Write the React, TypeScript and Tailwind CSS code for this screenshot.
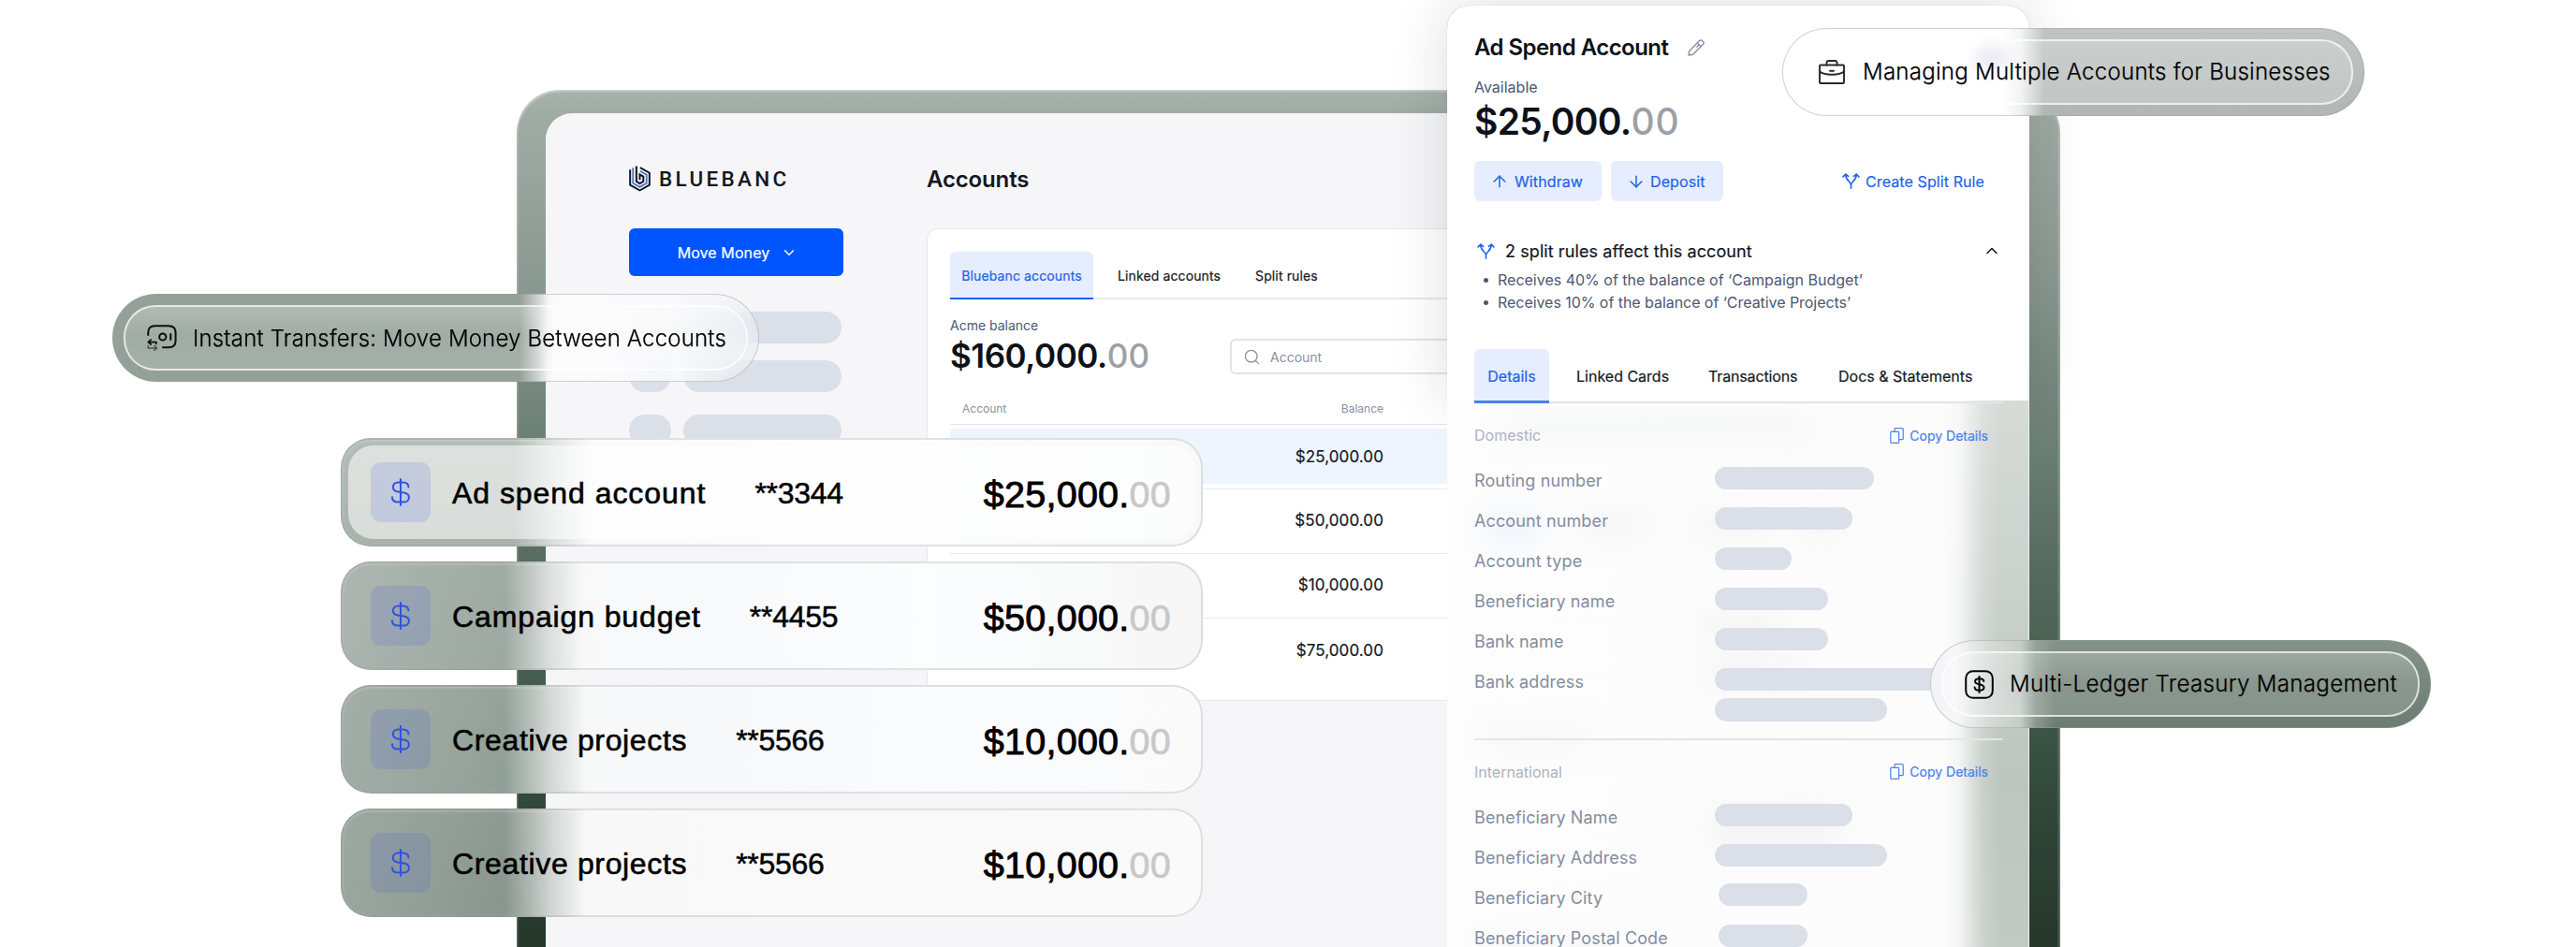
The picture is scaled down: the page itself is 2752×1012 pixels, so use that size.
import React from 'react';
import { ArrowDown, ArrowUp, ChevronDown, ChevronUp, Search } from 'lucide-react';

/* ---------- icons ---------- */

function BrandMark() {
  return (
    <svg viewBox="0 0 70 84" className="h-[28px] w-[23px]" fill="none" strokeWidth="6">
      <path d="M3.5 12V62L35 80L66.500 62V23L36 6" stroke="#10141f" />
      <path d="M13 6V56.500L35 69L57 56.500V29L36 17" stroke="#4a72cc" strokeWidth="5.500" />
      <path d="M24 1V51L35 57.500L46.500 51V35L35 28.500V46" stroke="#10141f" />
    </svg>
  );
}

function SplitIcon({ className }: { className: string }) {
  return (
    <svg viewBox="0 0 18 16" className={className} fill="none" stroke="#1f63ea" strokeWidth="1.500" strokeLinecap="round" strokeLinejoin="round">
      <path d="M9 15.300V11.500C9 9 3.600 7.500 3.600 1.500" />
      <path d="M9 11.500C9 9 14.400 7.500 14.400 1.500" />
      <path d="M1 3.600L3.600 1L6.200 3.200" />
      <path d="M11.800 3.200L14.400 1L17 3.600" />
    </svg>
  );
}

function PencilIcon() {
  return (
    <svg viewBox="0 0 18 18" className="h-[18px] w-[18px]" fill="none" stroke="#8b90a3" strokeWidth="1.400" strokeLinejoin="round">
      <path d="M1 17L1.700 12.400L12.300 1.800C13.300 0.800 14.800 0.800 15.800 1.800L16.200 2.200C17.200 3.200 17.200 4.700 16.200 5.700L5.600 16.300L1 17Z" />
      <path d="M10.300 3.800L14.200 7.700" />
      <path d="M12.300 5.700L9.500 8.500" />
    </svg>
  );
}

function CopyIcon() {
  return (
    <svg viewBox="0 0 15 17" className="h-[17px] w-[15px]" fill="none" stroke="#4a82ee" strokeWidth="1.200" strokeLinejoin="round">
      <rect x="0.800" y="4.300" width="8.800" height="12" rx="0.800" />
      <path d="M5 4.300V1.500C5 1 5.300 0.700 5.800 0.700H13.200C13.800 0.700 14.200 1 14.200 1.600V11.900C14.200 12.400 13.900 12.700 13.400 12.700H9.600" />
    </svg>
  );
}

function DollarIcon() {
  return (
    <svg viewBox="0 0 20 30" className="h-[30px] w-[20px]" fill="none" stroke="#3252de" strokeWidth="2" strokeLinecap="round">
      <path d="M10 1V29" />
      <path d="M18.400 9.600C18.400 6 15.700 4.400 12.200 4.400H7.600C4.200 4.400 1.900 6.600 1.900 9.500C1.900 12.500 3.900 14 7 14.500L13.300 15.400C16.700 15.900 18.900 17.500 18.900 20.400C18.900 23.500 16.500 25.600 13 25.600H7.200C3.500 25.600 1 23.600 1 20.200" />
    </svg>
  );
}

function TransferIcon() {
  return (
    <svg viewBox="0 0 32 28" className="h-[28px] w-[32px]" fill="none" stroke="#0c0e0d" strokeWidth="2" strokeLinecap="round" strokeLinejoin="round">
      <path d="M1.300 11V8.500C1.300 3.800 3.500 1.200 8.500 1.200H23C28.200 1.200 30.600 3.600 30.600 8.500V17C30.600 22 28.200 24.300 23 24.300H17" />
      <ellipse cx="16.800" cy="13" rx="3.600" ry="3.600" />
      <path d="M25.300 10V16" />
      <path d="M10 20.500V18.700H2M4.200 16L1.300 18.700L4.200 21" strokeWidth="1.700" />
      <path d="M1.300 22.500V25H9.500M8 22.500L10.800 25L8 27.200" stroke="#4b5150" strokeWidth="1.500" />
    </svg>
  );
}

function BriefcaseIcon() {
  return (
    <svg viewBox="0 0 28 26" className="h-[26px] w-[28px]" fill="none" stroke="#262a29" strokeWidth="1.900" strokeLinejoin="round" strokeLinecap="round">
      <rect x="1" y="5.500" width="26" height="19.500" rx="1" />
      <path d="M8.500 5.500V3C8.500 1.700 9.200 1 10.500 1H17.500C18.800 1 19.500 1.700 19.500 3V5.500" />
      <path d="M1 12.500C6 16.800 22 16.800 27 12.500" />
      <path d="M12 11.700H16" />
    </svg>
  );
}

function LedgerIcon() {
  return (
    <svg viewBox="0 0 31 31" className="h-[31px] w-[31px]" fill="none" stroke="#050606" strokeWidth="2" strokeLinecap="round">
      <rect x="1.200" y="1.200" width="28.600" height="28.600" rx="7.500" />
      <path d="M15.500 7V24" />
      <path d="M20.300 12C20.300 10.200 18.600 9.200 15.700 9.200C12.700 9.200 11 10.400 11 12.200C11 16.400 20.500 14.200 20.500 18.700C20.500 20.700 18.600 21.800 15.600 21.800C12.500 21.800 10.600 20.600 10.600 18.600" />
    </svg>
  );
}

/* ---------- dashboard ---------- */

function PlaceholderRow({ className }: { className: string }) {
  return (
    <div className={className}>
      <span className="w-[45px] rounded-full bg-[#dadfe8]" />
      <span className="w-[169px] rounded-full bg-[#dadfe8]" />
    </div>
  );
}

function Sidebar() {
  return (
    <aside className="w-[229px] shrink-0">
      <div className="flex h-[28px] items-center gap-[9px]">
        <BrandMark />
        <span className="font-['Roboto'] text-[22.500px] font-medium leading-[28px] tracking-[3.300px] text-[#14171f]">BLUEBANC</span>
      </div>
      <button className="mt-[38.500px] flex h-[51px] w-full items-center justify-center rounded-[6px] bg-[#0055ff] pl-[3px] pt-[2px] text-[16px] font-normal tracking-[0.100px] text-white [-webkit-text-stroke:0.200px_currentColor]">
        Move Money
        <ChevronDown className="ml-[12px] h-[18px] w-[18px]" strokeWidth={1.900} />
      </button>
      <div className="mt-[38.500px]">
        <PlaceholderRow className="flex h-[34px] gap-[13px]" />
        <PlaceholderRow className="mt-[18px] flex h-[34px] gap-[13px]" />
        <PlaceholderRow className="mt-[24px] flex h-[34px] gap-[13px]" />
      </div>
    </aside>
  );
}

const balances = ['$25,000.00', '$50,000.00', '$10,000.00', '$75,000.00'];

function AccountsCard() {
  return (
    <section className="mt-[38px] h-[505px] rounded-[12px] border-[1.500px] border-[#e6e7ea] bg-white pl-[24px] pt-[24px]">
      <nav className="flex h-[51px] border-b-[2px] border-[#e8e9eb] text-[14px] font-normal tracking-[0.120px] text-[#15181f] [-webkit-text-stroke:0.200px_currentColor]">
        <span className="flex h-[51px] w-[153px] items-center justify-center rounded-t-[6px] border-b-[2px] border-[#1f63ea] bg-[#e6edfe] pt-[2px] text-[#1f63ea]">
          Bluebanc accounts
        </span>
        <span className="ml-[26px] flex h-[51px] items-center">Linked accounts</span>
        <span className="ml-[37px] flex h-[51px] items-center">Split rules</span>
      </nav>
      <div className="flex h-[83px] pt-[18px]">
        <div className="w-[299px]">
          <p className="text-[14px] leading-[20px] text-[#4d5773]">Acme balance</p>
          <p className="mt-[2px] text-[35px] font-semibold leading-[40px] tracking-[-0.450px] text-[#0e1118]">
            $160,000.<span className="font-medium tracking-[0.300px] text-[#9ca0a8]">00</span>
          </p>
        </div>
        <div className="mt-[24px] flex h-[38px] flex-1 items-center rounded-l-[6px] border-[2px] border-r-0 border-[#e3e4e7] pl-[12px] text-[14px] text-[#8b91a1]">
          <Search className="mr-[10px] h-[19px] w-[19px]" strokeWidth={1.700} />
          Account
        </div>
      </div>
      <div className="flex h-[51px] items-end justify-between border-b-[1.500px] border-[#e3e4e7] pb-[8px] pl-[13px] text-[12px] leading-[16px] text-[#8b91a1]">
        <span>Account</span>
        <span className="mr-[689px]">Balance</span>
      </div>
      <div className="text-[17px] font-normal tracking-[0.100px] text-[#15181f] [-webkit-text-stroke:0.200px_currentColor]">
        <div className="h-[69px] border-b-[1.500px] border-[#e8e9ec] pt-[4px]">
          <div className="flex h-[59px] items-center justify-end rounded-l-[4px] bg-[#eff5ff] pr-[689px] pt-[2px]">{balances[0]}</div>
        </div>
        {balances.slice(1).map((b, i) => (
          <div key={b} className={i === 2 ? 'flex h-[69px] items-center justify-end pr-[689px]' : 'flex h-[69px] items-center justify-end border-b-[1.500px] border-[#e8e9ec] pr-[689px]'}>
            {b}
          </div>
        ))}
      </div>
    </section>
  );
}

function Dashboard() {
  return (
    <div className="ml-[552px] mt-[96px] h-[960px] w-[1649px] rounded-t-[46px] bg-[linear-gradient(to_bottom,#a9b3ad_0px,#a0aba4_25px,#8a9991_205px,#6d8076_370px,#586c61_500px,#4a6153_600px,#3a5344_690px,#2e4437_790px,#26372b_916px)] pl-[31px] pr-[33px] pt-[25px] shadow-[inset_1px_2px_2px_rgba(255,255,255,0.35),inset_-2px_0_2px_rgba(255,255,255,0.25)]">
      <div className="flex h-[935px] overflow-hidden rounded-t-[28px] bg-[#f6f6f9] pl-[89px] pt-[56px]">
        <Sidebar />
        <main className="ml-[89px] flex-1">
          <h1 className="text-[24px] font-semibold leading-[29px] tracking-[-0.150px] text-[#14171f]">Accounts</h1>
          <AccountsCard />
        </main>
      </div>
    </div>
  );
}

/* ---------- account detail panel ---------- */

function DetailRow({ label, bar }: { label: string; bar: string }) {
  return (
    <div className="flex h-[43.100px] items-start">
      <span className="w-[257px] pt-[1.500px] text-[18px] leading-[25px] tracking-[0.120px] text-[#838da1]">{label}</span>
      <span className={bar} />
    </div>
  );
}

function SectionHead({ title }: { title: string }) {
  return (
    <div className="flex h-[20px] items-center justify-between pr-[43px]">
      <span className="text-[16px] text-[#adb2bf]">{title}</span>
      <span className="flex items-center gap-[6px] text-[14px] font-normal text-[#4a82ee] [-webkit-text-stroke:0.200px_currentColor]">
        <CopyIcon />
        Copy Details
      </span>
    </div>
  );
}

function Ghosts() {
  return (
    <div className="pointer-events-none absolute inset-0 overflow-hidden opacity-45">
      <div className="blur-[14px]">
        <div className="ml-[60px] mt-[16px] h-[30px] w-[330px] bg-[#eeeff1]" />
        <div className="ml-[40px] mt-[74px] flex h-[30px] gap-[40px]">
          <span className="w-[60px] bg-[#dfe6fc]" />
          <span className="w-[80px] bg-[#eeeeef]" />
          <span className="w-[80px] bg-[#eeeeef]" />
          <span className="w-[40px] bg-[#eeeeef]" />
        </div>
        <div className="ml-[270px] mt-[75px] h-[30px] w-[90px] bg-[#ededef]" />
        <div className="ml-[270px] mt-[20px] h-[30px] w-[110px] bg-[#ededef]" />
        <div className="ml-[40px] mt-[40px] h-[30px] w-[110px] bg-[#f0f0f2]" />
        <div className="ml-[280px] mt-[60px] h-[40px] w-[140px] bg-[#eaeaeb]" />
        <div className="ml-[40px] mt-[100px] h-[30px] w-[130px] bg-[#efeff1]" />
      </div>
    </div>
  );
}

function DetailPanel() {
  return (
    <div className="absolute left-[1546px] top-[6px] w-[622px]">
      <div className="h-[422px] rounded-t-[24px] bg-white pl-[29px] pt-[30px] shadow-[0_0_60px_rgba(20,24,30,0.150),0_0_1px_rgba(0,0,0,0.300)]">
        <div className="flex h-[30px] items-center">
          <h2 className="mr-[21px] text-[24px] font-semibold tracking-[-0.550px] text-[#0e1118]">Ad Spend Account</h2>
          <PencilIcon />
        </div>
        <p className="mt-[17px] text-[16px] leading-[20px] text-[#4d5773]">Available</p>
        <p className="mt-[3.500px] text-[39px] font-semibold leading-[46px] tracking-[-0.700px] text-[#0e1118]">
          $25,000.<span className="font-medium tracking-[0.800px] text-[#9ca0a8]">00</span>
        </p>
        <div className="mt-[19.500px] flex h-[43px] items-center text-[16px] font-normal tracking-[0.100px] text-[#1f63ea] [-webkit-text-stroke:0.200px_currentColor]">
          <span className="flex h-[43px] w-[136px] items-center rounded-[6px] bg-[#e6edfe] pl-[17px]">
            <ArrowUp className="mr-[6px] h-[20px] w-[20px]" strokeWidth={1.800} />
            Withdraw
          </span>
          <span className="ml-[10px] flex h-[43px] w-[120px] items-center rounded-[6px] bg-[#e6edfe] pl-[17px]">
            <ArrowDown className="mr-[5px] h-[20px] w-[20px]" strokeWidth={1.800} />
            Deposit
          </span>
          <span className="ml-[127px] flex items-center gap-[6px]">
            <SplitIcon className="h-[17px] w-[19px]" />
            Create Split Rule
          </span>
        </div>
        <div className="mt-[41px] flex h-[24px] items-center pl-[3px]">
          <SplitIcon className="h-[17px] w-[19px]" />
          <span className="ml-[11px] w-[264px] whitespace-nowrap text-[18px] font-normal tracking-[0.080px] text-[#15181f] [-webkit-text-stroke:0.200px_currentColor]">2 split rules affect this account</span>
          <ChevronUp className="ml-[246px] h-[20px] w-[20px] text-[#15181f]" strokeWidth={1.900} />
        </div>
        <ul className="mt-[7px] text-[16px] leading-[24px] text-[#4d5773]">
          <li className="flex items-center"><i className="ml-[10px] mr-[10px] h-[5px] w-[5px] rounded-full bg-[#4d5773]" />Receives 40% of the balance of ‘Campaign Budget’</li>
          <li className="flex items-center tracking-[-0.050px]"><i className="ml-[10px] mr-[10px] h-[5px] w-[5px] rounded-full bg-[#4d5773]" />Receives 10% of the balance of ‘Creative Projects’</li>
        </ul>
        <nav className="relative z-10 mr-[28px] mt-[38px] flex h-[58px] items-center border-b-[2px] border-[#e2e4e5] text-[16px] font-normal text-[#15181f] [-webkit-text-stroke:0.200px_currentColor]">
          <span className="flex h-[58px] w-[80px] items-center justify-center self-start rounded-t-[6px] border-b-[3px] border-[#4a7ff0] bg-[#e6edfe] pt-[2px] text-[#1f63ea]">Details</span>
          <span className="ml-[29px] w-[99px] whitespace-nowrap pt-[2px]">Linked Cards</span>
          <span className="ml-[42px] w-[95px] whitespace-nowrap pt-[2px] tracking-[-0.150px]">Transactions</span>
          <span className="ml-[44px] whitespace-nowrap pt-[2px]">Docs &amp; Statements</span>
        </nav>
      </div>
      <div className="relative h-[600px] border-r border-[#eef1ef] bg-[linear-gradient(to_right,#fdfdfd_0%,#fcfcfc_85%,rgba(252,252,252,0.850)_88%,rgba(252,252,252,0.200)_92%,rgba(252,252,252,0)_95%),linear-gradient(to_bottom,#d6dbd8_0px,#c9d0cc_220px,#bcc5bf_400px,#c2cac5_600px)] bg-origin-border pl-[29px] pt-[27px]">
        <Ghosts />
        <div className="relative">
          <SectionHead title="Domestic" />
          <div className="mt-[24px]">
            <DetailRow label="Routing number" bar="h-[24px] w-[170px] rounded-full bg-[#dadfe8]" />
            <DetailRow label="Account number" bar="h-[24px] w-[147px] rounded-full bg-[#dadfe8]" />
            <DetailRow label="Account type" bar="h-[24px] w-[82px] rounded-full bg-[#dadfe8]" />
            <DetailRow label="Beneficiary name" bar="h-[24px] w-[121px] rounded-full bg-[#dadfe8]" />
            <DetailRow label="Bank name" bar="h-[24px] w-[121px] rounded-full bg-[#dadfe8]" />
            <DetailRow label="Bank address" bar="h-[24px] w-[250px] rounded-full bg-[#dadfe8]" />
          </div>
          <div className="-mt-[12px] ml-[257px] h-[25px] w-[184px] rounded-full bg-[#dadfe8]" />
          <div className="mb-[24px] mr-[28px] mt-[18px] h-[2px] bg-[#e3e6e5]" />
          <SectionHead title="International" />
          <div className="mt-[24.500px]">
            <DetailRow label="Beneficiary Name" bar="h-[24px] w-[147px] rounded-full bg-[#dadfe8]" />
            <DetailRow label="Beneficiary Address" bar="h-[24px] w-[184px] rounded-full bg-[#dadfe8]" />
            <DetailRow label="Beneficiary City" bar="ml-[4px] -mt-px h-[24px] w-[95px] rounded-full bg-[#dadfe8]" />
            <DetailRow label="Beneficiary Postal Code" bar="ml-[4px] h-[24px] w-[95px] rounded-full bg-[#dadfe8]" />
          </div>
        </div>
      </div>
    </div>
  );
}

/* ---------- floating account cards ---------- */

const floating = [
  { name: 'Ad spend account', track: 'tracking-[0.950px]', digits: '**3344', amount: '$25,000.', fill: 'bg-[linear-gradient(to_right,rgba(251,251,252,0)_20%,rgba(251,251,252,0.650)_25%,rgba(252,252,253,0.970)_29%,#fdfdfd_60%,#f8f9fa_100%),linear-gradient(to_bottom,#b3bdb7,#a8b2ac)]' },
  { name: 'Campaign budget', track: 'tracking-[0.880px]', digits: '**4455', amount: '$50,000.', fill: 'bg-[linear-gradient(to_right,rgba(251,251,252,0)_19%,rgba(251,251,252,0.650)_24%,rgba(250,250,251,0.980)_28%,#f8f9fb_45%,#fcfdfe_68%,#f6f6f6_100%),linear-gradient(110deg,#adb6b1_0%,#a2ada6_15%,#95a39b_30%)]' },
  { name: 'Creative projects', track: 'tracking-[0.650px]', digits: '**5566', amount: '$10,000.', fill: 'bg-[linear-gradient(to_right,rgba(251,251,252,0)_19%,rgba(251,251,252,0.650)_24.500%,rgba(250,250,251,0.980)_28.500%,#f7f8fa_45%,#fafbfc_68%,#fafafb_100%),linear-gradient(110deg,#a4aea8_0%,#98a59d_15%,#889a90_30%)]' },
  { name: 'Creative projects', track: 'tracking-[0.650px]', digits: '**5566', amount: '$10,000.', fill: 'bg-[linear-gradient(to_right,rgba(251,251,252,0)_19%,rgba(251,251,252,0.650)_24.500%,rgba(250,250,250,0.980)_28.500%,#fafafa_100%),linear-gradient(110deg,#9da8a1_0%,#929f96_13%,#85918a_26%)]' },
];

function FloatingAccounts() {
  return (
    <div className="absolute left-[364px] top-[468px] flex w-[921px] flex-col gap-[16px] font-['Liberation_Sans']">
      {floating.map((a, i) => (
        <div key={i} className={`relative flex h-[116px] items-center rounded-[32px] border-[2px] border-[rgba(150,158,155,0.280)] bg-origin-border pl-[30px] shadow-[inset_0_1px_3px_rgba(255,255,255,0.300)] ${a.fill}`}>
          {i === 0 && <div className="absolute inset-[6px] rounded-[27px] bg-white/55" />}
          <span className="relative flex h-[64px] w-[64px] items-center justify-center rounded-[11px] bg-[rgba(60,80,230,0.140)]">
            <DollarIcon />
          </span>
          <span className={`relative ml-[23px] pt-[2px] text-[32px] leading-[40px] text-black [-webkit-text-stroke:0.600px_black] ${a.track}`}>{a.name}</span>
          <span className="relative ml-[52px] pt-[2px] text-[32px] leading-[40px] tracking-[-0.300px] text-black [-webkit-text-stroke:0.500px_black]">{a.digits}</span>
          <span className="relative ml-auto mr-[32px] pt-[3px] text-[39.500px] leading-[44px] tracking-[0.250px] text-black [-webkit-text-stroke:0.900px_black]">
            {a.amount}
            <span className="text-[#c8c8c8] [-webkit-text-stroke:0.700px_#c8c8c8]">00</span>
          </span>
        </div>
      ))}
    </div>
  );
}

/* ---------- feature pills ---------- */

function Pills() {
  return (
    <>
      <div className="absolute left-[120px] top-[314px] flex h-[94px] w-[691px] items-center rounded-full border border-[rgba(150,158,155,0.450)] bg-[linear-gradient(to_right,rgba(252,252,253,0)_63%,rgba(252,252,253,0.900)_67.500%,#fbfbfc_69%,rgba(250,250,252,0.800)_86%,rgba(250,250,252,0.200)_100%),linear-gradient(to_right,rgba(148,161,153,1)_66%,transparent_69%)] bg-origin-border pl-[36px] backdrop-blur-lg">
        <div className="absolute inset-[11px] rounded-[34px] border-[2px] border-white/70 bg-[linear-gradient(to_bottom,rgba(255,255,255,0.280),rgba(255,255,255,0.120)_45%,rgba(255,255,255,0.160))]" />
        <span className="relative"><TransferIcon /></span>
        <span className="relative ml-[17px] whitespace-nowrap pt-px text-[24px] font-light tracking-[0.180px] text-black [-webkit-text-stroke:0.250px_black]">Instant Transfers: Move Money Between Accounts</span>
      </div>

      <div className="absolute left-[1904px] top-[30px] flex h-[94px] w-[622px] items-center rounded-full border border-[rgba(150,158,155,0.450)] bg-[linear-gradient(to_right,#ffffff_38%,rgba(255,255,255,0.800)_41%,rgba(255,255,255,0)_45%),linear-gradient(to_bottom,#c0c5c3,#b0b6b3)] bg-origin-border pl-[38px]">
        <div className="absolute inset-[11px] rounded-[34px] border-[2px] border-white/70 bg-white/20" />
        <div className="absolute left-[205px] top-[18px] h-[26px] w-[36px] rounded-full bg-[#ebecf4] blur-[7px]" />
        <span className="relative"><BriefcaseIcon /></span>
        <span className="relative ml-[19px] whitespace-nowrap text-[24px] font-light tracking-[0.280px] text-black [-webkit-text-stroke:0.250px_black]">Managing Multiple Accounts for Businesses</span>
      </div>

      <div className="absolute left-[2062px] top-[684px] flex h-[94px] w-[535px] items-center rounded-full border border-[rgba(150,158,155,0.450)] bg-[linear-gradient(to_right,#f1f2f6_0%,#f8f8f9_5%,#d5dad7_12%,#c6cdc9_18%,rgba(170,180,174,0.500)_21%,rgba(130,145,137,0)_25%),linear-gradient(to_bottom,#84938a,#6c7c72)] bg-origin-border pl-[36px]">
        <div className="absolute inset-[11px] rounded-[34px] border-[2px] border-white/70 bg-[linear-gradient(to_bottom,rgba(255,255,255,0.220),rgba(255,255,255,0.130)_50%,rgba(255,255,255,0.160))]" />
        <span className="relative"><LedgerIcon /></span>
        <span className="relative ml-[17px] whitespace-nowrap text-[24px] font-light tracking-[0.350px] text-black [-webkit-text-stroke:0.250px_black]">Multi-Ledger Treasury Management</span>
      </div>
    </>
  );
}

export default function App() {
  return (
    <div className="relative flow-root h-[1012px] w-[2752px] overflow-hidden bg-white font-['Inter',sans-serif]">
      <Dashboard />
      <DetailPanel />
      <FloatingAccounts />
      <Pills />
    </div>
  );
}
